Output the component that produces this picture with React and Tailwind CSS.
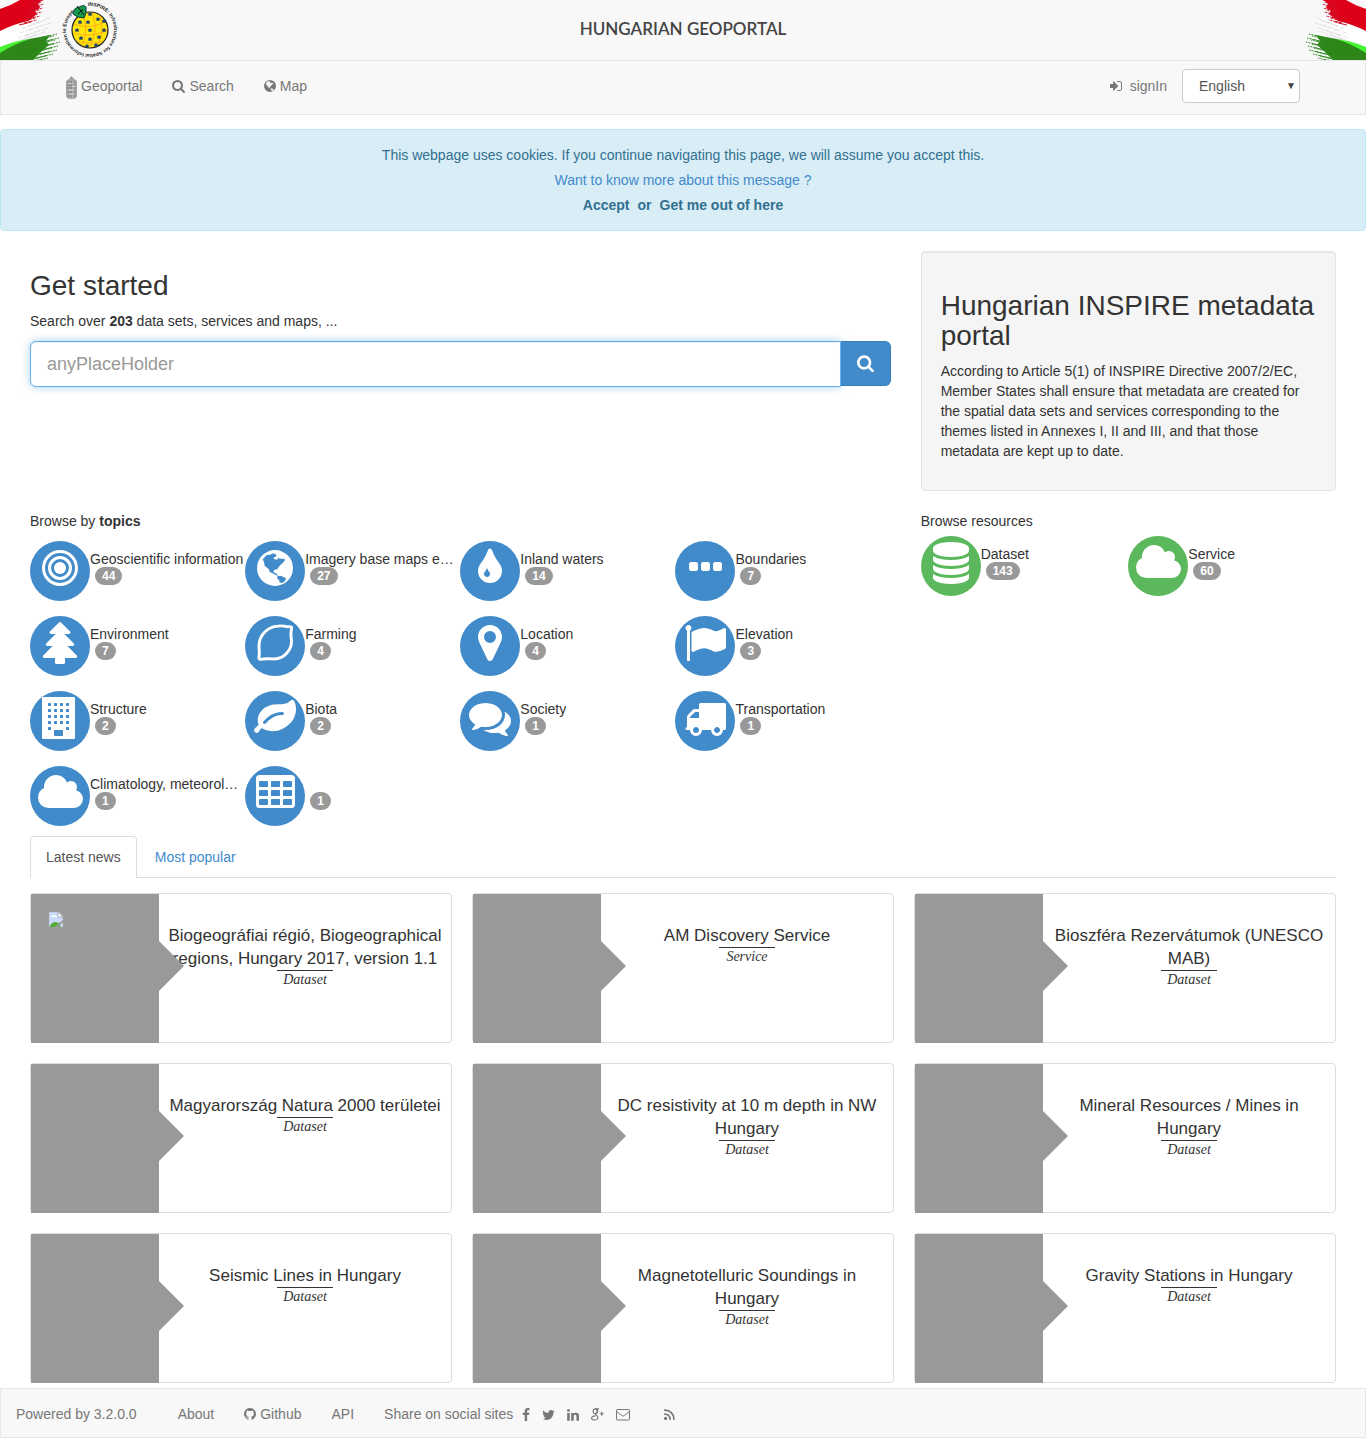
import React from "react";

const ICONS = {
  search: {
    w: 13,
    d: "M1216 832q0-185-131.5-316.5t-316.5-131.5-316.5 131.5-131.5 316.5 131.5 316.5 316.5 131.5 316.5-131.5 131.5-316.5zm512 832q0 52-38 90t-90 38q-54 0-90-38l-343-342q-179 124-399 124-143 0-273.5-55.5t-225-150-150-225-55.5-273.5 55.5-273.5 150-225 225-150 273.5-55.5 273.5 55.5 225 150 150 225 55.5 273.5q0 220-124 399l343 343q37 37 37 90z",
  },
  tint: {
    w: 8,
    d: "M896 1152q0-36-20-69-1-1-15.5-22.5t-25.5-38-25-44-21-50.5q-4-16-21-16t-21 16q-7 23-21 50.5t-25 44-25.5 38-15.5 22.5q-20 33-20 69 0 53 37.5 90.5t90.5 37.5 90.5-37.5 37.5-90.5zm512-128q0 212-150 362t-362 150-362-150-150-362q0-145 81-275 6-9 62.5-90.5t101-151 99.5-178 83-201.5q9-30 34-47t51-17 51.5 17 33.5 47q28 93 83 201.5t99.5 178 101 151 62.5 90.5q81 127 81 275z",
  },
  tree: {
    w: 12,
    d: "M1632 1472q0 26-19 45t-45 19h-462q1 17 6 87.5t5 108.5q0 25-18 42.5t-43 17.5h-320q-25 0-43-17.5t-18-42.5q0-38 5-108.5t6-87.5h-462q-26 0-45-19t-19-45 19-45l402-403h-229q-26 0-45-19t-19-45 19-45l402-403h-197q-26 0-45-19t-19-45 19-45l384-384q19-19 45-19t45 19l384 384q19 19 19 45t-19 45-45 19h-197l402 403q19 19 19 45t-19 45-45 19h-229l402 403q19 19 19 45z",
  },
  marker: {
    w: 8,
    d: "M1152 640q0-106-75-181t-181-75-181 75-75 181 75 181 181 75 181-75 75-181zm256 0q0 109-33 179l-364 774q-16 33-47.5 52t-67.5 19-67.5-19-46.5-52l-365-774q-33-70-33-179 0-212 150-362t362-150 362 150 150 362z",
  },
  flag: {
    w: 14,
    d: "M320 256q0 72-64 110v1266q0 13-9.5 22.5t-22.5 9.5h-64q-13 0-22.5-9.5t-9.5-22.5v-1266q-64-38-64-110 0-53 37.5-90.5t90.5-37.5 90.5 37.5 37.5 90.5zm1472 64v763q0 25-12.5 38.5t-39.5 27.5q-215 116-369 116-61 0-123.5-22t-108.5-48-115.5-48-142.5-22q-192 0-464 146-17 9-33 9-26 0-45-19t-19-45v-742q0-32 31-55 21-14 79-43 236-120 421-120 107 0 200 29t219 88q38 19 88 19 54 0 117.5-21t110-47 88-47 54.5-21q26 0 45 19t19 45z",
  },
  leaf: {
    w: 14,
    d: "M1280 704q0-26-19-45t-45-19q-172 0-318 49.5t-259.5 134-235.5 219.5q-19 21-19 45 0 26 19 45t45 19q24 0 45-19 27-24 74-71t67-66q137-124 268.5-176t313.5-52q26 0 45-19t19-45zm512-198q0 95-20 193-46 224-184.5 383t-357.5 268q-214 108-438 108-148 0-286-47-15-5-88-42t-96-37q-16 0-39.5 32t-45 70-52.5 70-60 32q-43 0-63.5-17.5t-45.5-59.5q-2-4-6-11t-5.5-10-3-9.5-1.5-13.5q0-35 31-73.5t68-65.5 68-56 31-48q0-4-14-38t-16-44q-9-51-9-104 0-115 43.5-220t119-184.5 170.5-139 204-95.5q55-18 145-25.5t179.5-9 178.5-6 163.5-24 113.5-56.5l29.5-29.5 29.5-28 27-20 36.5-16 43.5-4.5q39 0 70.5 46t47.5 112 24 124 8 96z",
  },
  comments: {
    w: 14,
    d: "M1408 768q0 139-94 257t-256.5 186.5-353.5 68.5q-86 0-176-16-124 88-278 128-36 9-86 16h-3q-11 0-20.5-8t-11.5-21q-1-3-1-6.5t.5-6.5 2-6l2.5-5 3.5-5.5 4-5 4.5-5 4-4.5q5-6 23-25t26-29.5 22.5-29 25-38.5 20.5-44q-124-72-195-177t-71-224q0-139 94-257t256.5-186.5 353.5-68.5 353.5 68.5 256.5 186.5 94 257zm384 256q0 120-71 224.5t-195 176.5q10 24 20.5 44t25 38.5 22.5 29 26 29.5 23 25q1 1 4 4.5t4.5 5 4 5 3.5 5.5l2.5 5 2 6 .5 6.5-1 6.5q-3 14-13 22t-22 7q-50-7-86-16-154-40-278-128-90 16-176 16-271 0-472-132 58 4 88 4 161 0 309-45t264-129q125-92 192-212t67-254q0-77-23-152 129 71 204 178t75 230z",
  },
  truck: {
    w: 14,
    d: "M640 1408q0-52-38-90t-90-38-90 38-38 90 38 90 90 38 90-38 38-90zm-384-512h384v-256h-158q-13 0-22 9l-195 195q-9 9-9 22v30zm1280 512q0-52-38-90t-90-38-90 38-38 90 38 90 90 38 90-38 38-90zm256-1088v1024q0 15-4 26.5t-13.5 18.5-16.5 11.5-23.5 6-22.5 2-25.5 0-22.5-.5q0 106-75 181t-181 75-181-75-75-181h-384q0 106-75 181t-181 75-181-75-75-181h-64q-3 0-22.5.5t-25.5 0-22.5-2-23.5-6-16.5-11.5-13.5-18.5-4-26.5q0-26 19-45t45-19v-320q0-8-.5-35t0-38 2.5-34.5 6.5-37 14-30.5 22.5-30l198-198q19-19 50.5-32t58.5-13h160v-192q0-26 19-45t45-19h1024q26 0 45 19t19 45z",
  },
  cloud: {
    w: 15,
    d: "M1856 1152q0 159-112.5 271.5t-271.5 112.5h-1088q-185 0-316.5-131.5t-131.5-316.5q0-132 71-241.5t187-163.5q-2-28-2-43 0-212 150-362t362-150q158 0 286.5 88t187.5 230q70-62 166-62 106 0 181 75t75 181q0 75-41 138 129 30 213 134.5t84 239.5z",
  },
  database: {
    w: 12,
    d: "M896 768q237 0 443-43t325-127v170q0 69-103 128t-280 93.5-385 34.5-385-34.5-280-93.5-103-128v-170q119 84 325 127t443 43zm0 768q237 0 443-43t325-127v170q0 69-103 128t-280 93.5-385 34.5-385-34.5-280-93.5-103-128v-170q119 84 325 127t443 43zm0-384q237 0 443-43t325-127v170q0 69-103 128t-280 93.5-385 34.5-385-34.5-280-93.5-103-128v-170q119 84 325 127t443 43zm0-1152q208 0 385 34.5t280 93.5 103 128v128q0 69-103 128t-280 93.5-385 34.5-385-34.5-280-93.5-103-128v-128q0-69 103-128t280-93.5 385-34.5z",
  },
  github: {
    w: 12,
    d: "M896 128q209 0 385.5 103t279.5 279.5 103 385.5q0 251-146.5 451.5t-378.5 277.5q-27 5-40-7t-13-30q0-3 .5-76.5t.5-134.5q0-97-52-142 57-6 102.5-18t94-39 81-66.5 53-105 20.5-150.5q0-119-79-206 37-91-8-204-28-9-81 11t-92 44l-38 24q-93-26-192-26t-192 26q-16-11-42.5-27t-83.5-38.5-85-13.5q-45 113-8 204-79 87-79 206 0 85 20.5 150t52.5 105 80.5 67 94 39 102.5 18q-39 36-49 103-21 10-45 15t-57 5-65.5-21.5-55.5-62.5q-19-32-48.5-52t-49.5-24l-20-3q-21 0-29 4.5t-5 11.5 9 14 13 12l7 5q22 10 43.5 38t31.5 51l10 23q13 38 44 61.5t67 30 69.5 7 55.5-3.5l23-4q0 38 .5 88.5t.5 54.5q0 18-13 30t-40 7q-232-77-378.5-277.5t-146.5-451.5q0-209 103-385.5t279.5-279.5 385.5-103z",
  },
  facebook: {
    w: 8,
    d: "M1343 12v264h-157q-86 0-116 36t-30 108v189h293l-39 296h-254v759h-306v-759h-255v-296h255v-218q0-186 104-288.5t277-102.5q147 0 228 12z",
  },
  twitter: {
    w: 13,
    d: "M1684 408q-67 98-162 167 1 14 1 42 0 130-38 259.5t-115.5 248.5-184.5 210.5-258 146-323 54.5q-271 0-496-145 35 4 78 4 225 0 401-138-105-2-188-64.5t-114-159.5q33 5 61 5 43 0 85-11-112-23-185.5-111.5t-73.5-205.5v-4q68 38 146 41-66-44-105-115t-39-154q0-88 44-163 121 149 294.5 238.5t371.5 99.5q-8-38-8-74 0-134 94.5-228.5t228.5-94.5q140 0 236 102 109-21 205-78-37 115-142 178 93-10 186-50z",
  },
  linkedin: {
    w: 12,
    d: "M477 625v991h-330v-991h330zm21-306q1 73-50.5 122t-135.5 49h-2q-82 0-132-49t-50-122q0-74 51.5-122.5t134.5-48.5 133 48.5 51 122.5zm1166 729v568h-329v-530q0-105-40.5-164.5t-126.5-59.5q-63 0-105.5 34.5t-63.5 85.5q-11 30-11 81v553h-329q2-399 2-647t-1-296l-1-48h329v144h-2q20-32 41-56t56.5-52 87-43.5 114.5-15.5q171 0 275 113.5t104 332.5z",
  },
  signIn: {
    w: 12,
    d: "M1184 896q0 26-19 45l-544 544q-19 19-45 19t-45-19-19-45v-288h-320q-26 0-45-19t-19-45v-384q0-26 19-45t45-19h320v-288q0-26 19-45t45-19 45 19l544 544q19 19 19 45zm480-352v704q0 119-84.5 203.5t-203.5 84.5h-320q-32 0-32-32v-64q0-32 32-32h320q66 0 113-47t47-113v-704q0-66-47-113t-113-47h-320q-32 0-32-32v-64q0-32 32-32h320q119 0 203.500 84.500t84.500 203.500z",
  },
};

const units = [0, 1, 2, 3];

function CustomShape({ name }) {
  switch (name) {
    case "globe":
      return (
        <path
          transform="translate(896 896) scale(14.2) translate(-75 -68)"
          fillRule="evenodd"
          d="M75 14a54 54 0 1 1 0 108a54 54 0 1 1 0-108z
             M38 42L50 29L60 28L70 24L79 28L78 34L70 37L73 42L82 43L84 37L90 40L104 40L104 46L96 55L90 60L84 69L81 72L72 74L70 79L74 83L79 84L84 92L77 89L66 83L59 80L56 71L44 62L42 51z
             M82 93L92 91L107 98L108 103L99 112L89 112L88 105L81 99z"
        />
      );
    case "bullseye":
      return (
        <>
          <circle cx="896" cy="896" r="704" fill="none" stroke="currentColor" strokeWidth="128" />
          <circle cx="896" cy="896" r="448" fill="none" stroke="currentColor" strokeWidth="128" />
          <circle cx="896" cy="896" r="256" />
        </>
      );
    case "ellipsis":
      return [192, 704, 1216].map((x) => (
        <rect key={x} x={x} y="640" width="384" height="384" rx="96" />
      ));
    case "lemon":
      return (
        <path
          d="M1600 215q-40-30-190-15q-200-50-400-25q-300 20-540 240q-210 210-250 500q-15 180 5 330q10 170-15 250q-10 60 15 80q60 30 150 5q180-25 380-5q330 30 570-170q240-220 270-480q15-160-15-310q-10-150 5-240q40-120 15-160z"
          fill="none"
          stroke="currentColor"
          strokeWidth="124"
          strokeLinejoin="round"
        />
      );
    case "building":
      return (
        <>
          <rect x="128" y="0" width="1408" height="1792" rx="56" />
          <g fill="#428bca">
            {units.map((c) =>
              [0, 1, 2, 3, 4].map((r) =>
                r === 4 && (c === 1 || c === 2) ? null : (
                  <rect key={c + "-" + r} x={384 + c * 256} y={256 + r * 256} width="128" height="128" rx="24" />
                )
              )
            )}
            <rect x="640" y="1408" width="384" height="256" rx="32" />
          </g>
        </>
      );
    case "table":
      return (
        <>
          <rect x="64" y="128" width="1664" height="1408" rx="150" />
          <g fill="#428bca">
            {[192, 704, 1216].map((x) =>
              [384, 768, 1152].map((y) => (
                <rect key={x + "-" + y} x={x} y={y} width="384" height="256" rx="36" />
              ))
            )}
          </g>
        </>
      );
    case "envelope":
      return (
        <g fill="none" stroke="currentColor" strokeWidth="128">
          <rect x="64" y="192" width="1664" height="1344" rx="100" />
          <path d="M80 370q40 110 150 200l450 360q120 96 216 96t216-96l450-360q110-90 150-200" />
        </g>
      );
    case "rss":
      return (
        <>
          <circle cx="400" cy="1330" r="210" />
          <g fill="none" stroke="currentColor" strokeWidth="220" strokeLinecap="round">
            <path d="M300 770a680 680 0 0 1 680 650" />
            <path d="M300 280a1140 1140 0 0 1 1170 1140" />
          </g>
        </>
      );
    case "gplus":
      return (
        <g fill="none" stroke="currentColor" strokeWidth="150">
          <ellipse cx="600" cy="430" rx="260" ry="310" />
          <path d="M600 110h480M840 140q170 250 20 440q-150 130-200 220q0 90 170 190q170 130 120 300q-80 250-430 250q-370-20-380-240q0-260 490-300" />
          <path d="M1180 740h520M1440 480v520" />
        </g>
      );
    default:
      return null;
  }
}

const CUSTOM_WIDTH = { globe: 12, bullseye: 12, ellipsis: 11, lemon: 12, building: 12, table: 13, envelope: 14, rss: 11, gplus: 13 };

function Icon({ name, scale = 1, className = "" }) {
  const icon = ICONS[name];
  const custom = name in CUSTOM_WIDTH;
  const w = custom ? CUSTOM_WIDTH[name] : icon.w;
  return (
    <svg
      aria-hidden="true"
      className={"inline-block shrink-0 overflow-visible fill-current " + className}
      width={w * scale}
      height={14 * scale}
      viewBox={`${896 - w * 64} 0 ${w * 128} 1792`}
    >
      {custom ? <CustomShape name={name} /> : <path d={icon.d} />}
    </svg>
  );
}

const RED_STREAKS = [
  [44, 0], [42, 2], [44, 4], [41, 6], [43, 8], [40, 10], [42, 12], [38, 14], [40, 16], [36, 18], [37, 20], [32, 22],
];
const GREY_STREAKS = [
  [52, 17], [46, 20], [53, 22], [44, 24], [50, 27], [42, 29], [47, 31], [39, 33],
];
const GREEN_STREAKS = [
  [57, 34], [54, 36], [59, 38], [55, 40], [60, 42], [54, 44], [58, 46], [52, 48], [57, 50], [49, 52], [53, 54], [46, 56], [48, 58], [38, 60],
];

function FlagBrush({ mirrored }) {
  return (
    <svg aria-hidden="true" className={mirrored ? "size-[60px] -scale-x-100" : "size-[60px]"} viewBox="0 0 60 60">
      <path d="M0 31L34 20L46 17L40 34L20 40L0 47z" fill="#fff" />
      <path d="M0 9Q10 6 20 0H42L38 4L40 8L35 11L37 14L32 18L28 21Q14 24 0 31z" fill="#de0018" />
      {RED_STREAKS.map(([x, y]) => (
        <path key={y} d={`M${x - 13} ${y + 3}L${x} ${y}`} stroke="#d01026" strokeWidth="1" strokeDasharray="9 1 2 1" />
      ))}
      {GREY_STREAKS.map(([x, y]) => (
        <path key={y} d={`M${x - 24} ${y + 9}L${x} ${y}`} stroke="#d4d4d4" strokeWidth=".7" strokeDasharray="4 2 9 1 3 1" />
      ))}
      <path d="M0 50Q18 40 40 37L50 35L46 41L49 45L42 51L33 60H0z" fill="#2c8618" />
      <path d="M0 47Q14 41 30 39Q14 44 0 53z" fill="#45f52f" />
      {GREEN_STREAKS.map(([x, y]) => (
        <path key={y} d={`M${x - 17} ${y + 4}L${x} ${y}`} stroke="#318c22" strokeWidth="1" strokeDasharray="12 1 2 1" />
      ))}
    </svg>
  );
}

const STARS = [
  [80, 22], [88, 22], [98, 19], [77, 30], [90, 30], [104, 30], [81, 38], [90, 39], [99, 37], [87, 46], [96, 45], [90, 14], [104, 21],
];

function InspireLogo() {
  return (
    <svg aria-label="INSPIRE" role="img" className="size-[60px] overflow-visible" viewBox="60 0 60 60">
      <path id="ring" d="M88 6a24 24 0 0 1 4 48a24 24 0 0 1-4-48" fill="none" />
      <circle cx="90" cy="30" r="18" fill="#ffe60a" stroke="#222" strokeWidth="1.200" />
      <g fill="none" stroke="#ffae1a" strokeWidth="1">
        <path d="M83 15q6 15-1 31M92 13q7 15-2 34M100 16q5 14-2 29M74 24q14 6 31-2M73 33q15 5 34-2M77 41q12 4 26 0" />
      </g>
      {STARS.map(([x, y]) => (
        <path key={x + "," + y} d={`M${x} ${y - 2}l1 1.200 1.500.300-1.100 1.100.3 1.500-1.700-.6-1.700.6.3-1.500-1.100-1.100 1.500-.300z`} fill="#1d3f6b" />
      ))}
      <path d="M73 14Q73 8 79 7Q84 4 86 7Q87 14 84 18Q77 18 73 14z" fill="#119a49" stroke="#123" strokeWidth=".8" />
      <path d="M77 6L84 15M78 14L83 9" stroke="#111" strokeWidth="1" />
      <text className="fill-[#222] font-[Liberation_Sans] text-[5px] font-bold">
        <textPath href="#ring">INSPIRE: Infrastructure for Spatial Information in Europe</textPath>
      </text>
    </svg>
  );
}

function BarrelIcon() {
  return (
    <svg aria-hidden="true" className="h-6 w-[11px] overflow-visible" viewBox="0 -2 11 24">
      <path d="M5.500 0L8 3V5H3V3z" fill="#999" />
      <rect x="0" y="3" width="11" height="20" rx="4" fill="#a6a6a6" />
      <path d="M1 6h9M1 9h9M0 12h11M1 16h9M1 20h9" stroke="#808080" strokeWidth="1" />
      <path d="M2 7.500h3M6 10.500h4M2 14h6M3 18h5" stroke="#ddd" strokeWidth="1" />
      <path d="M7 5v17" stroke="#c4c4c4" strokeWidth="1" />
    </svg>
  );
}

function BrokenImage() {
  return (
    <svg role="img" aria-label="Missing thumbnail" className="size-4" viewBox="0 0 16 16">
      <path d="M1 0h10l4 4v11H1z" fill="#c9dafa" stroke="#aaa" strokeWidth=".5" />
      <path d="M10 0v5h5z" fill="#fff" stroke="#999" strokeWidth=".7" />
      <path d="M3 5q0-2 2-1.500q2-1.500 3 .5q2 0 1.500 1z" fill="#fff" />
      <path d="M1.500 15q2-5 6-5q4 0 5 5z" fill="#55ad38" />
      <path d="M8 15l7-6" stroke="#999" strokeWidth="2" />
    </svg>
  );
}

const TOPICS = [
  ["bullseye", "Geoscientific information", 44],
  ["globe", "Imagery base maps earth cover", 27],
  ["tint", "Inland waters", 14],
  ["ellipsis", "Boundaries", 7],
  ["tree", "Environment", 7],
  ["lemon", "Farming", 4],
  ["marker", "Location", 4],
  ["flag", "Elevation", 3],
  ["building", "Structure", 2],
  ["leaf", "Biota", 2],
  ["comments", "Society", 1],
  ["truck", "Transportation", 1],
  ["cloud", "Climatology, meteorology, atmosphere", 1],
  ["table", "", 1],
];

const NEWS = [
  ["Biogeográfiai régió, Biogeographical regions, Hungary 2017, version 1.1", "Dataset"],
  ["AM Discovery Service", "Service"],
  ["Bioszféra Rezervátumok (UNESCO MAB)", "Dataset"],
  ["Magyarország Natura 2000 területei", "Dataset"],
  ["DC resistivity at 10 m depth in NW Hungary", "Dataset"],
  ["Mineral Resources / Mines in Hungary", "Dataset"],
  ["Seismic Lines in Hungary", "Dataset"],
  ["Magnetotelluric Soundings in Hungary", "Dataset"],
  ["Gravity Stations in Hungary", "Dataset"],
];

function Category({ icon, label, count, color }) {
  return (
    <a href="#search" className="flex h-[60px] min-w-0">
      <span className={"flex size-[60px] shrink-0 justify-center rounded-full pt-[6px] text-white " + color}>
        <Icon name={icon} scale={3} />
      </span>
      <span className="flex min-w-0 flex-col items-start pt-[10px]">
        <span className="h-4 max-w-full truncate leading-4">{label}</span>
        <span className="ml-[5px] h-[18px] rounded-[10px] bg-[#999] px-[7px] text-xs leading-[18px] font-bold text-white">{count}</span>
      </span>
    </a>
  );
}

function NewsCard({ title, type, broken }) {
  return (
    <article className="flex h-[150px] rounded border border-[#ddd]">
      <div className="relative h-[149px] w-32 shrink-0 bg-[#999] pt-[18px] pl-[17px]">
        {broken && <BrokenImage />}
        <span className="absolute top-[47px] left-full border-y-[25px] border-l-[25px] border-y-transparent border-l-[#999]" />
      </div>
      <div className="flex min-w-0 flex-1 flex-col items-center px-2 pt-[30px] text-center">
        <h3 className="text-[17px] leading-[23px]">
          <a href="#record">{title}</a>
        </h3>
        <p className="w-14 border-t border-[#333] font-[Liberation_Serif,serif] text-sm leading-[18px] italic">{type}</p>
      </div>
    </article>
  );
}

export default function App() {
  return (
    <div className="bg-white font-['Liberation_Sans',Arial,sans-serif] text-sm leading-5 text-[#333]">
      <header className="flex h-[60px] items-center justify-between bg-[#f8f8f8]">
        <div className="flex flex-1">
          <FlagBrush />
          <InspireLogo />
        </div>
        <h1 className="pb-0.5 font-[Lato,sans-serif] text-[17px] leading-5 font-semibold text-[#444]">HUNGARIAN GEOPORTAL</h1>
        <div className="flex flex-1 justify-end">
          <FlagBrush mirrored />
        </div>
      </header>

      <nav className="flex h-[55px] items-start justify-between border border-[#e7e7e7] bg-[#f8f8f8] px-[65px] pt-2 text-[#777]">
        <div className="flex h-[34px] items-center gap-[30px]">
          <a href="#home" className="flex items-center gap-1">
            <BarrelIcon />
            Geoportal
          </a>
          <a href="#search" className="flex items-center gap-1">
            <Icon name="search" />
            Search
          </a>
          <a href="#map" className="flex items-center gap-1">
            <Icon name="globe" />
            Map
          </a>
        </div>
        <div className="flex items-center gap-[15px]">
          <a href="#signin" className="flex items-center gap-2">
            <Icon name="signIn" />
            signIn
          </a>
          <div className="relative">
            <select
              aria-label="Language"
              className="h-[34px] w-[118px] appearance-none rounded border border-[#ccc] bg-white pl-4 text-sm text-[#555]"
            >
              <option>English</option>
            </select>
            <span className="pointer-events-none absolute top-[7px] right-1 text-[10px] leading-5 text-[#444]">▼</span>
          </div>
        </div>
      </nav>

      <div role="alert" className="mt-[14px] flex flex-col items-center gap-[5px] rounded border border-[#bce8f1] bg-[#d9edf7] py-[15px] text-[#31708f]">
        <p>This webpage uses cookies. If you continue navigating this page, we will assume you accept this.</p>
        <a href="#cookies" className="text-[#428bca]">Want to know more about this message ?</a>
        <p className="flex gap-2 font-bold">
          <button type="button">Accept</button>
          <span>or</span>
          <button type="button">Get me out of here</button>
        </p>
      </div>

      <main className="px-[15px] pb-[5px]">
        <section className="flex pt-5">
          <div className="w-2/3 px-[15px] pt-5">
            <h2 className="text-[28px] leading-[30px]">Get started</h2>
            <p className="mt-2.5">
              Search over <b>203</b> data sets, services and maps, ...
            </p>
            <form className="mt-2.5 flex items-start">
              <input
                type="text"
                aria-label="Search"
                placeholder="anyPlaceHolder"
                className="h-[46px] min-w-0 flex-1 rounded-l-md border border-[#66afe9] bg-white px-4 text-lg shadow-[inset_0_1px_1px_rgba(0,0,0,0.075),0_0_8px_rgba(102,175,233,0.6)] outline-none placeholder:text-[#999]"
              />
              <button type="button" aria-label="Search" className="flex h-[45px] w-[50px] items-center justify-center rounded-r-md border border-l-0 border-[#357ebd] bg-[#428bca] text-white">
                <Icon name="search" scale={1.3} />
              </button>
            </form>
          </div>
          <div className="w-1/3 px-[15px]">
            <aside className="rounded border border-[#e3e3e3] bg-[#f5f5f5] px-[19px] pt-[39px] pb-[29px] shadow-[inset_0_1px_1px_rgba(0,0,0,0.05)]">
              <h2 className="text-[28px] leading-[30px]">Hungarian INSPIRE metadata portal</h2>
              <p className="mt-2.5">
                According to Article 5(1) of INSPIRE Directive 2007/2/EC, Member States shall ensure that metadata are created for the spatial data sets and services corresponding to the themes listed in Annexes I, II and III, and that those metadata are kept up to date.
              </p>
            </aside>
          </div>
        </section>

        <section className="flex pt-5">
          <div className="w-2/3 px-[15px]">
            <p>
              Browse by <b>topics</b>
            </p>
            <div className="mt-2.5 grid grid-cols-4 gap-y-[15px]">
              {TOPICS.map(([icon, label, count]) => (
                <Category key={icon} icon={icon} label={label} count={count} color="bg-[#428bca]" />
              ))}
            </div>
          </div>
          <div className="w-1/3 px-[15px]">
            <p>Browse resources</p>
            <div className="mt-[5px] grid grid-cols-2">
              <Category icon="database" label="Dataset" count={143} color="bg-[#5cb85c]" />
              <Category icon="cloud" label="Service" count={60} color="bg-[#5cb85c]" />
            </div>
          </div>
        </section>

        <section className="px-[15px] pt-2.5">
          <div role="tablist" className="flex gap-0.5 border-b border-[#ddd]">
            <button type="button" role="tab" aria-selected="true" className="-mb-px h-[42px] rounded-t border border-b-0 border-[#ddd] bg-white px-[15px] pb-px text-[#555]">
              Latest news
            </button>
            <button type="button" role="tab" aria-selected="false" className="h-[41px] px-4 text-[#428bca]">
              Most popular
            </button>
          </div>
          <div className="mt-[15px] grid grid-cols-3 gap-5">
            {NEWS.map(([title, type], i) => (
              <NewsCard key={title} title={title} type={type} broken={i === 0} />
            ))}
          </div>
        </section>
      </main>

      <footer className="flex h-[50px] items-center border border-[#e7e7e7] bg-[#f8f8f8] px-[15px] pt-0.5 text-[#777]">
        <span>Powered by 3.2.0.0</span>
        <nav className="ml-[41px] flex items-center gap-[30px]">
          <a href="#about">About</a>
          <a href="#github" className="flex items-center gap-1">
            <Icon name="github" />
            Github
          </a>
          <a href="#api">API</a>
          <span>Share on social sites</span>
        </nav>
        <div className="ml-[9px] flex items-center gap-3">
          <a href="#facebook" aria-label="Facebook"><Icon name="facebook" className="block" /></a>
          <a href="#twitter" aria-label="Twitter"><Icon name="twitter" className="block" /></a>
          <a href="#linkedin" aria-label="LinkedIn"><Icon name="linkedin" className="block" /></a>
          <a href="#googleplus" aria-label="Google Plus"><Icon name="gplus" className="block" /></a>
          <a href="#mail" aria-label="E-mail"><Icon name="envelope" className="block" /></a>
        </div>
        <a href="#rss" aria-label="RSS" className="ml-[34px]"><Icon name="rss" className="block" /></a>
      </footer>
    </div>
  );
}
